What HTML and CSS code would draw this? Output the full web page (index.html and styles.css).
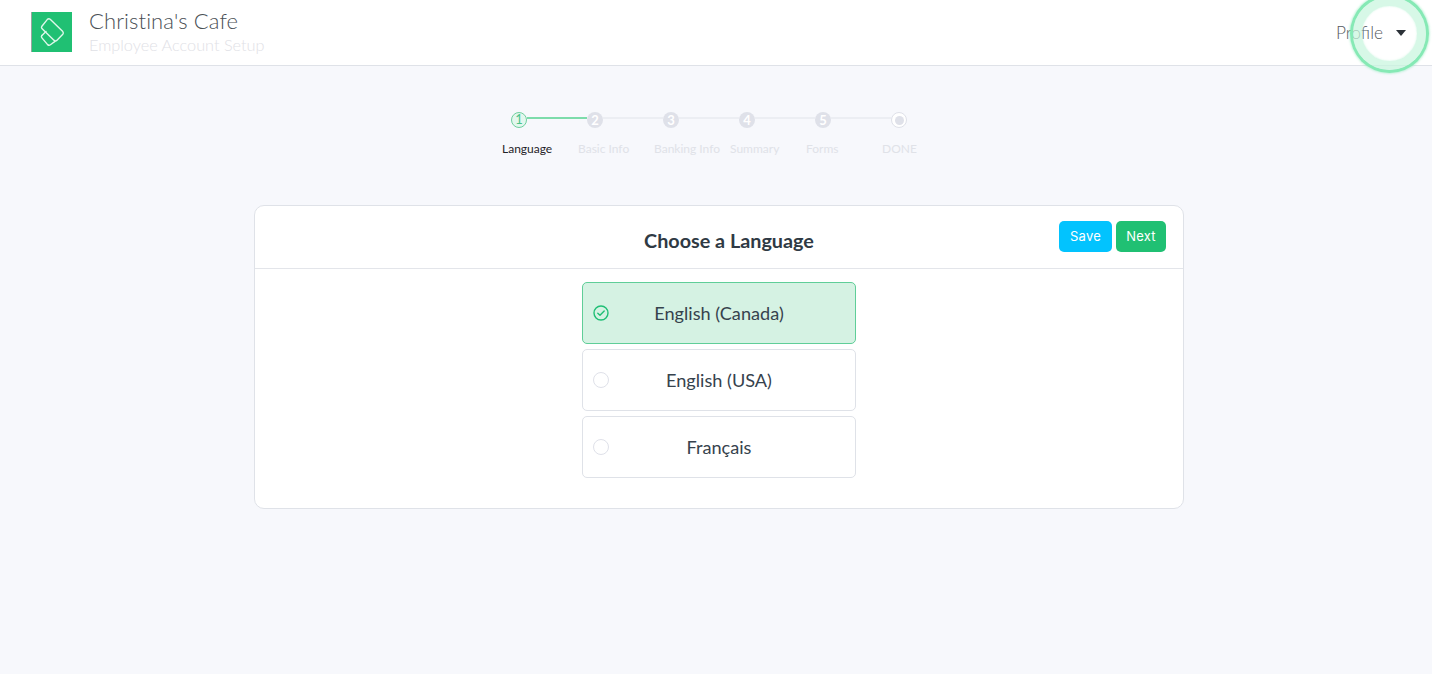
FILE: index.html
```html
<!DOCTYPE html>
<html lang="en">
<head>
<meta charset="utf-8">
<title>Employee Account Setup</title>
<link rel="stylesheet" href="styles.css">
</head>
<body>
<header class="topbar">
  <div class="brand">
    <div class="logo">
      <svg width="41" height="40" viewBox="0 0 41 40" fill="none" stroke="#dff7ea" stroke-width="1.4" stroke-linejoin="round" stroke-linecap="round">
        <path d="M19.2 7.3 L31.8 19.6 Q32.9 21 31.8 22.2 L26 28.2 Q24.6 29.6 23.2 28.4 L10.9 16.6 Q10 15.4 10.9 14.2 L16.4 7.4 Q17.8 6.2 19.2 7.3 Z"/>
        <path d="M10.9 23.4 Q9.8 24.6 10.9 25.9 L16.6 32.6 Q18 33.8 19.4 32.8 L24 29.4"/>
        <path d="M10.9 23.4 L15 19.6"/>
      </svg>
    </div>
    <div class="brand-text">
      <div class="brand-name">Christina's Cafe</div>
      <div class="brand-sub">Employee Account Setup</div>
    </div>
  </div>
  <div class="profile">
    <span class="profile-label">Profile</span>
    <span class="caret"></span>
    <span class="pulse"></span>
  </div>
</header>

<main class="page">
  <div class="stepper">
    <div class="track">
      <span class="dot dot-active">1</span>
      <span class="line line-active"></span>
      <span class="dot">2</span>
      <span class="line"></span>
      <span class="dot">3</span>
      <span class="line"></span>
      <span class="dot">4</span>
      <span class="line"></span>
      <span class="dot">5</span>
      <span class="line"></span>
      <span class="dot-end"><span class="dot-end-core"></span></span>
    </div>
    <div class="labels">
      <span class="label label-active">Language</span>
      <span class="label">Basic Info</span>
      <span class="label">Banking Info</span>
      <span class="label">Summary</span>
      <span class="label">Forms</span>
      <span class="label">DONE</span>
    </div>
  </div>

  <section class="card">
    <div class="card-head">
      <h1 class="card-title">Choose a Language</h1>
      <div class="actions">
        <button class="btn btn-save">Save</button>
        <button class="btn btn-next">Next</button>
      </div>
    </div>
    <div class="options">
      <div class="option option-selected">
        <svg class="option-check" width="16" height="16" viewBox="0 0 16 16" fill="none" stroke="#1fbf75">
          <circle cx="8" cy="8" r="7" stroke-width="1.4"/>
          <path d="M4.8 8.2 L7 10.3 L11.2 5.9" stroke-width="1.4" stroke-linecap="round" stroke-linejoin="round"/>
        </svg>
        <span>English (Canada)</span>
      </div>
      <div class="option">
        <span class="radio"></span>
        <span>English (USA)</span>
      </div>
      <div class="option">
        <span class="radio"></span>
        <span>Français</span>
      </div>
    </div>
  </section>
</main>
</body>
</html>
```
FILE: styles.css
```css
* { box-sizing: border-box; }
html, body { margin: 0; height: 100%; }
body {
  background: #f7f8fc;
  font-family: "Lato", "Liberation Sans", sans-serif;
  color: #2b3640;
  overflow: hidden;
}
.topbar {
  height: 66px;
  background: #fff;
  border-bottom: 1px solid #dfe2e8;
  display: flex;
  align-items: center;
  justify-content: space-between;
  padding: 0 26px 2px 31px;
}
.brand { display: flex; align-items: center; gap: 17px; }
.logo {
  width: 41px;
  height: 40px;
  background: #20c073;
  box-shadow: 1px 0 0 #9aa5a0 inset;
}
.logo svg { display: block; }
.brand-text { display: flex; flex-direction: column; margin-top: -1px; }
.brand-name { font-size: 22px; font-weight: 300; line-height: 26px; color: #4a4f55; letter-spacing: 0.1px; }
.brand-sub { font-size: 16.3px; font-weight: 300; line-height: 21px; color: #dfe1e6; }
.profile { position: relative; display: flex; align-items: center; gap: 13px; margin-top: 2px; }
.profile-label { font-size: 17.3px; font-weight: 300; color: #555a60; }
.caret {
  width: 0;
  height: 0;
  border-left: 5.5px solid transparent;
  border-right: 5.5px solid transparent;
  border-top: 6px solid #2b3138;
}
.pulse {
  position: absolute;
  left: 17px;
  top: -25px;
  width: 73px;
  height: 73px;
  border-radius: 50%;
  border: 9.5px solid rgba(200, 245, 222, 0.72);
  box-shadow: 0 0 0 3px #86e9b5, 0 0 2px 4px rgba(134, 233, 181, 0.45), inset 0 0 2px rgba(200, 245, 222, 0.8);
}
.page { display: flex; flex-direction: column; align-items: center; padding-left: 6px; }
.stepper { margin-top: 46px; width: 456px; margin-left: 22px; }
.track { display: flex; align-items: flex-start; padding-left: 9px; height: 16px; }
.dot, .dot-active, .dot-end {
  flex: none;
  width: 16px;
  height: 16px;
  border-radius: 50%;
  font-size: 13px;
  font-weight: 700;
  line-height: 16px;
  text-align: center;
}
.dot { background: #dfe1e9; color: #fff; }
.dot-active {
  background: #e3f7ee;
  border: 1.5px solid #6fcf9f;
  color: #4cc38a;
  font-weight: 400;
  line-height: 13px;
}
.dot-end {
  border: 1.5px solid #dfe1e9;
  background: #fff;
  display: flex;
  align-items: center;
  justify-content: center;
}
.dot-end-core { width: 9px; height: 9px; border-radius: 50%; background: #dfe1e9; }
.line { flex: none; width: 60px; height: 2px; margin-top: 5px; background: #eceef3; }
.line-active { background: #7ddcab; }
.labels { display: flex; margin-top: 13px; }
.label {
  flex: none;
  width: 76px;
  font-size: 12px;
  line-height: 15px;
  color: #e0e2e8;
  white-space: nowrap;
}
.label-active { color: #1f2328; }
.card {
  width: 930px;
  height: 304px;
  margin-top: 49px;
  background: #fff;
  border: 1px solid #dfe2e8;
  border-radius: 10px;
}
.card-head {
  height: 63px;
  border-bottom: 1px solid #e3e5ea;
  display: flex;
  align-items: center;
  justify-content: flex-end;
  padding: 0 17px 2px 0;
  position: relative;
}
.card-title {
  margin: 0;
  position: absolute;
  left: 0;
  right: 0;
  padding: 8px 0 0 20px;
  text-align: center;
  font-size: 19.8px;
  font-weight: 700;
  color: #2f3a44;
}
.actions { display: flex; gap: 4px; position: relative; }
.btn {
  border: 0;
  height: 31px;
  border-radius: 5px;
  color: #fff;
  font-family: "Inter", "Liberation Sans", sans-serif;
  font-size: 13px;
  letter-spacing: 0.2px;
  padding: 0;
}
.btn-save { width: 53px; background: #02c3fe; }
.btn-next { width: 50px; background: #20c073; }
.options {
  display: flex;
  flex-direction: column;
  align-items: center;
  gap: 5px;
  padding-top: 13px;
}
.option {
  position: relative;
  width: 274px;
  height: 62px;
  border: 1px solid #dfe2e8;
  border-radius: 5px;
  background: #fff;
  display: flex;
  align-items: center;
  justify-content: center;
  font-size: 18.15px;
  color: #36424d;
}
.option-selected { background: #d5f2e3; border-color: #5fce98; }
.radio, .option-check { position: absolute; left: 10px; top: 22px; }
.radio { width: 16px; height: 16px; border-radius: 50%; border: 1.5px solid #dfe1e9; background: #fff; }
```
